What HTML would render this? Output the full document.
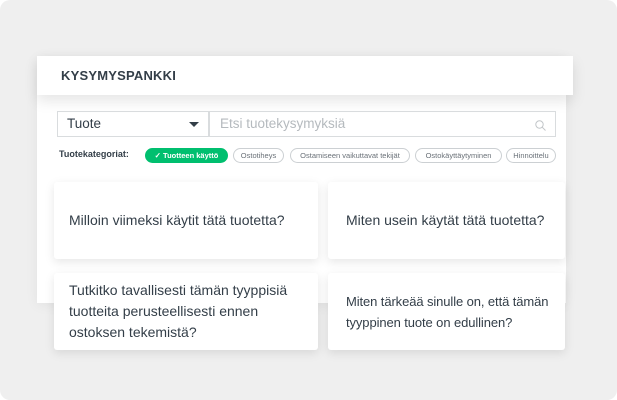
<!DOCTYPE html><html><head><style>
body{margin:0;width:617px;height:400px;background:#fff;font-family:"Liberation Sans",sans-serif;position:relative;overflow:hidden}
.bg{position:absolute;left:0;top:0;width:617px;height:400px;background:#efefef;border-radius:10px}
.panel{position:absolute;left:37px;top:56px;width:529px;height:247px;background:#fff;box-shadow:0 2px 12px rgba(0,0,0,.06)}
.hdr{position:absolute;left:37px;top:56px;width:536px;height:39px;background:#fff;box-shadow:0 6px 14px rgba(0,0,0,.1)}
.hdr span{position:absolute;left:24px;top:12px;font-weight:bold;font-size:13px;color:#333e48;letter-spacing:.2px}
.sel{position:absolute;left:57px;top:111px;width:152px;height:26px;border:1px solid #d9dcde;font-size:13.5px;color:#333e48;line-height:24px;box-sizing:border-box;padding-left:9px}
.sel:after{content:"";position:absolute;right:9px;top:10px;border:5px solid transparent;border-top:5px solid #333e48;border-bottom:0}
.inp{position:absolute;left:209px;top:111px;width:347px;height:26px;border:1px solid #d9dcde;font-size:13.5px;color:#b5babe;line-height:24px;box-sizing:border-box;padding-left:10px}
.lbl{position:absolute;left:59px;top:149px;font-size:9px;font-weight:bold;color:#333e48}
.tag{position:absolute;top:148px;border:1px solid #ccd0d3;border-radius:8px;font-size:7.5px;color:#6a7178;line-height:13px;text-align:center;box-sizing:border-box;height:15px;white-space:nowrap}
.on{background:#00bf6f;border-color:#00bf6f;color:#fff;font-weight:bold}
.card{position:absolute;background:#fff;border-radius:3px;box-shadow:0 3px 10px rgba(0,0,0,.1);font-size:14px;color:#333e48;line-height:21px;box-sizing:border-box;padding-left:15px;display:flex;align-items:center;white-space:nowrap}
</style></head><body>
<div class="bg"></div>
<div class="panel"></div>
<div class="hdr"><span>KYSYMYSPANKKI</span></div>
<div class="sel">Tuote</div>
<div class="inp">Etsi tuotekysymyksiä<svg style="position:absolute;right:9px;top:8px" width="11" height="11" viewBox="0 0 11 11"><circle cx="4.5" cy="4.5" r="3.7" fill="none" stroke="#c2c6c9" stroke-width="1"/><path d="M7.2 7.2L10.5 10.5" stroke="#c2c6c9"/></svg></div>
<div class="lbl">Tuotekategoriat:</div>
<div class="tag on" style="left:145px;width:83px">✓ Tuotteen käyttö</div>
<div class="tag" style="left:233px;width:51px">Ostotiheys</div>
<div class="tag" style="left:290px;width:120px">Ostamiseen vaikuttavat tekijät</div>
<div class="tag" style="left:415px;width:87px">Ostokäyttäytyminen</div>
<div class="tag" style="left:506px;width:50px">Hinnoittelu</div>
<div class="card" style="left:54px;top:182px;width:264px;height:77px">Milloin viimeksi käytit tätä tuotetta?</div>
<div class="card" style="left:328px;top:182px;width:237px;height:77px;padding-left:18px">Miten usein käytät tätä tuotetta?</div>
<div class="card" style="left:54px;top:273px;width:264px;height:77px">Tutkitko tavallisesti tämän tyyppisiä<br>tuotteita perusteellisesti ennen<br>ostoksen tekemistä?</div>
<div class="card" style="left:328px;top:273px;width:237px;height:77px;padding-left:18px;font-size:13px;letter-spacing:-.1px">Miten tärkeää sinulle on, että tämän<br>tyyppinen tuote on edullinen?</div>
</body></html>
